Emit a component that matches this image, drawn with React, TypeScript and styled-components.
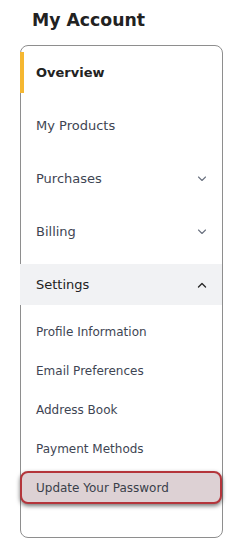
import React from 'react'
import styled, { createGlobalStyle } from 'styled-components'

const GlobalStyle = createGlobalStyle`
  html, body {
    margin: 0;
    padding: 0;
    background: #ffffff;
    font-family: "DejaVu Sans", Verdana, sans-serif;
  }
`

const Page = styled.div`
  width: 236px;
  padding: 0 0 14px 20px;
  box-sizing: border-box;
`

const Title = styled.h1`
  margin: 0;
  padding: 9px 0 0 12px;
  height: 45px;
  box-sizing: border-box;
  font-size: 17.3px;
  line-height: 22px;
  font-weight: bold;
  color: #222222;
`

const Panel = styled.nav`
  width: 203px;
  box-sizing: border-box;
  border: 1px solid #8e8e8e;
  border-radius: 8px;
  padding: 6px 0 33px;
`

const Menu = styled.div`
  display: flex;
  flex-direction: column;
  gap: 12px;
`

const MenuItem = styled.div<{ $active?: boolean; $open?: boolean }>`
  height: 41px;
  display: flex;
  align-items: center;
  justify-content: space-between;
  padding: 0 15px 0 12px;
  border-left: 4px solid ${p => (p.$active ? '#f5b731' : 'transparent')};
  margin-left: -1px;
  background: ${p => (p.$open ? '#f1f2f4' : 'transparent')};
  font-size: 13px;
  font-weight: ${p => (p.$active ? 'bold' : 'normal')};
  color: ${p => (p.$active || p.$open ? '#222222' : '#3e4553')};
`

const SubMenu = styled.div`
  display: flex;
  flex-direction: column;
  gap: 6px;
  padding-top: 10px;
`

const SubItem = styled.div<{ $marked?: boolean }>`
  height: 33px;
  box-sizing: border-box;
  display: flex;
  align-items: center;
  margin-left: -1px;
  padding-left: ${p => (p.$marked ? '14px' : '16px')};
  font-size: 12px;
  color: #3e4553;
  ${p =>
    p.$marked &&
    `
    border: 2.5px solid #b4353b;
    border-radius: 8px;
    background: #ddd1d4;
    box-shadow: 0 2px 4px rgba(0, 0, 0, 0.55);
    color: #3a3f4a;
  `}
`

const Chevron = ({ up, dark }: { up?: boolean; dark?: boolean }) => (
  <svg width="10" height="6" viewBox="0 0 10 6" fill="none">
    <polyline
      points={up ? '1.5,5 5,1.5 8.5,5' : '1.5,1 5,4.5 8.5,1'}
      stroke={dark ? '#2a2a2a' : '#6b7280'}
      strokeWidth={up ? 1.4 : 1.1}
      strokeLinecap="round"
      strokeLinejoin="round"
    />
  </svg>
)

const settings = [
  'Profile Information',
  'Email Preferences',
  'Address Book',
  'Payment Methods',
  'Update Your Password',
]

export default function App() {
  return (
    <>
      <GlobalStyle />
      <Page>
        <Title>My Account</Title>
        <Panel>
          <Menu>
            <MenuItem $active>Overview</MenuItem>
            <MenuItem>My Products</MenuItem>
            <MenuItem>
              Purchases
              <Chevron />
            </MenuItem>
            <MenuItem>
              Billing
              <Chevron />
            </MenuItem>
            <MenuItem $open>
              Settings
              <Chevron up dark />
            </MenuItem>
          </Menu>
          <SubMenu>
            {settings.map(s => (
              <SubItem key={s} $marked={s === 'Update Your Password'}>
                {s}
              </SubItem>
            ))}
          </SubMenu>
        </Panel>
      </Page>
    </>
  )
}
